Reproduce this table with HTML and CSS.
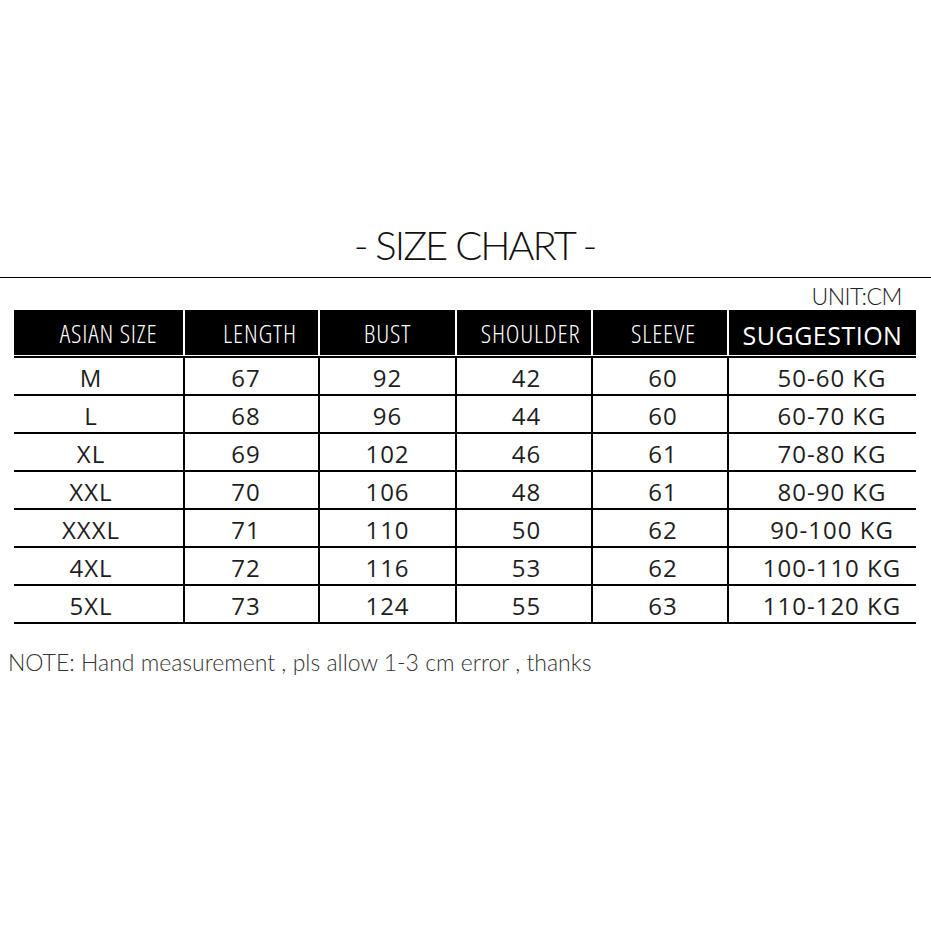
FILE: index.html
```html
<!DOCTYPE html>
<html>
<head>
<meta charset="utf-8">
<link rel="stylesheet" href="styles.css">
</head>
<body>
<div class="page">
  <h1 class="title">- SIZE CHART -</h1>
  <div class="rule"></div>
  <div class="unit">UNIT:CM</div>
  <div class="chart">
    <div class="head">
      <div class="hc">ASIAN SIZE</div>
      <div class="hc">LENGTH</div>
      <div class="hc">BUST</div>
      <div class="hc">SHOULDER</div>
      <div class="hc">SLEEVE</div>
      <div class="hc sugg">SUGGESTION</div>
    </div>
    <div class="body">
      <div class="row"><div class="c">M</div><div class="c">67</div><div class="c">92</div><div class="c">42</div><div class="c">60</div><div class="c">50-60 KG</div></div>
      <div class="row"><div class="c">L</div><div class="c">68</div><div class="c">96</div><div class="c">44</div><div class="c">60</div><div class="c">60-70 KG</div></div>
      <div class="row"><div class="c">XL</div><div class="c">69</div><div class="c">102</div><div class="c">46</div><div class="c">61</div><div class="c">70-80 KG</div></div>
      <div class="row"><div class="c">XXL</div><div class="c">70</div><div class="c">106</div><div class="c">48</div><div class="c">61</div><div class="c">80-90 KG</div></div>
      <div class="row"><div class="c">XXXL</div><div class="c">71</div><div class="c">110</div><div class="c">50</div><div class="c">62</div><div class="c">90-100 KG</div></div>
      <div class="row"><div class="c">4XL</div><div class="c">72</div><div class="c">116</div><div class="c">53</div><div class="c">62</div><div class="c">100-110 KG</div></div>
      <div class="row"><div class="c">5XL</div><div class="c">73</div><div class="c">124</div><div class="c">55</div><div class="c">63</div><div class="c">110-120 KG</div></div>
    </div>
  </div>
  <p class="note">NOTE: Hand measurement , pls allow 1-3 cm error , thanks</p>
</div>
</body>
</html>
```
FILE: styles.css
```css
html, body {
  margin: 0;
  padding: 0;
  background: #fff;
}
* {
  box-sizing: border-box;
}
.page {
  width: 931px;
  height: 931px;
  overflow: hidden;
  font-family: "Open Sans", "Liberation Sans", sans-serif;
  color: #1a1a1a;
}
.title {
  margin: 0;
  padding: 224px 0 0 18px;
  height: 266px;
  line-height: 42px;
  font-family: Lato, "Open Sans", sans-serif;
  font-size: 40px;
  font-weight: 300;
  letter-spacing: -2px;
  text-align: center;
  color: #111;
}
.rule {
  margin-top: 11px;
  height: 1.4px;
  background: #000;
}
.unit {
  margin-top: 4px;
  height: 28px;
  line-height: 28px;
  padding-right: 29px;
  text-align: right;
  font-family: Lato, "Open Sans", sans-serif;
  font-size: 23px;
  font-weight: 300;
  letter-spacing: -0.5px;
  color: #222;
}
.chart {
  margin: 0 15px 0 14px;
  width: 902px;
}
.head, .row {
  display: grid;
  grid-template-columns: 169px 135px 137px 136px 136px 189px;
}
.head {
  height: 45px;
  background: #000;
  margin-bottom: 1px;
}
.hc {
  display: flex;
  align-items: center;
  justify-content: center;
  color: #fff;
  font-size: 26px;
  font-weight: 300;
  font-stretch: 75%;
  letter-spacing: 0.8px;
}
.hc + .hc {
  border-left: 2px solid #fff;
}
.hc:nth-child(1) { padding-left: 20px; }
.hc:nth-child(2) { padding-left: 17px; }
.hc:nth-child(4) { padding-left: 13px; }
.hc:nth-child(5) { padding-left: 7px; }
.hc.sugg {
  font-weight: 400;
  font-stretch: 100%;
  font-size: 25px;
  letter-spacing: 0.5px;
  padding-top: 4px;
}
.body {
  border-top: 2px solid #000;
}
.row {
  height: 38px;
  border-bottom: 2px solid #000;
}
.c {
  display: flex;
  align-items: center;
  justify-content: center;
  font-size: 24px;
  letter-spacing: 1px;
  padding-top: 3px;
  color: #1e1e1e;
}
.c + .c {
  border-left: 2px solid #000;
}
.c:nth-child(1) { padding-right: 15px; }
.c:nth-child(2) { padding-right: 11px; }
.c:nth-child(4) { padding-left: 5px; }
.c:nth-child(5) { padding-left: 6px; }
.c:nth-child(6) { padding-left: 19px; }
.note {
  margin: 22px 0 0 8px;
  font-family: Lato, "Open Sans", sans-serif;
  font-size: 23px;
  font-weight: 300;
  color: #333;
  line-height: 32px;
}
```
